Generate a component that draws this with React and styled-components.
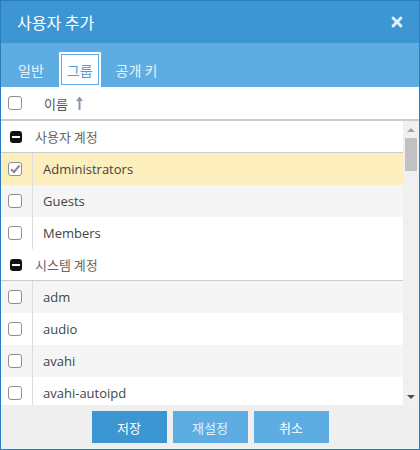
import React from 'react';
import styled, { createGlobalStyle } from 'styled-components';
import { FaTimes } from 'react-icons/fa';

const Global = createGlobalStyle`
  html, body { margin: 0; padding: 0; background: #fff; }
  body { font-family: "Open Sans", "Noto Sans CJK KR", sans-serif; }
  * { box-sizing: border-box; }
`;

const KR = `"Noto Sans CJK KR", "Open Sans", sans-serif`;

const Dialog = styled.div`
  width: 420px;
  height: 450px;
  border: 1px solid #2c7bbd;
  display: flex;
  flex-direction: column;
  overflow: hidden;
  background: #fff;
`;

const TitleBar = styled.div`
  height: 42px;
  flex: none;
  background: #3c96d2;
  display: flex;
  align-items: center;
  justify-content: space-between;
  padding: 0 14px 0 16px;
  color: #fff;
`;

const Title = styled.div`
  font-family: ${KR};
  font-size: 16px;
  line-height: 1;
`;

const CloseBtn = styled.span`
  display: flex;
  color: #e6f0f9;
`;

const TabBar = styled.div`
  height: 44px;
  flex: none;
  background: #5dade2;
  display: flex;
  align-items: flex-end;
  gap: 7px;
  padding-left: 9px;
`;

const Tab = styled.div`
  height: 35px;
  padding: 0 6px;
  border: 2px solid ${p => (p.$active ? '#fff' : 'transparent')};
  background: ${p => (p.$active ? '#fff' : 'transparent')};
  box-shadow: ${p => (p.$active ? 'inset 0 0 0 1px #5dade2' : 'none')};
  color: ${p => (p.$active ? '#4a9fd8' : '#e6f2fb')};
  font-family: ${KR};
  font-size: 14px;
  display: flex;
  align-items: center;
`;

const HeaderRow = styled.div`
  height: 34px;
  flex: none;
  border-bottom: 2px solid #cccccc;
  display: flex;
  align-items: center;
`;

const CheckCell = styled.div`
  width: 32px;
  height: 100%;
  flex: none;
  padding-left: 7px;
  display: flex;
  align-items: center;
  border-right: ${p => (p.$divider ? '1px solid #dddddd' : 'none')};
`;

const HeaderLabel = styled.div`
  display: flex;
  align-items: center;
  padding-left: 11px;
  font-family: ${KR};
  font-size: 13px;
  color: #555;
  gap: 8px;
`;

const Box = styled.span`
  width: 14px;
  height: 14px;
  border: 1px solid #8f8f8f;
  border-radius: 3px;
  background: #fff;
  display: flex;
  align-items: center;
  justify-content: center;
  flex: none;
`;

const Body = styled.div`
  flex: 1;
  display: flex;
  min-height: 0;
`;

const List = styled.div`
  flex: 1;
  overflow: hidden;
`;

const GroupRow = styled.div`
  height: 32px;
  border-bottom: 1px solid #cccccc;
  display: flex;
  align-items: center;
  padding-left: 9px;
  gap: 13px;
  font-family: ${KR};
  font-size: 13px;
  color: #666;
  background: #fff;
`;

const MinusSquare = styled.span`
  width: 12px;
  height: 12px;
  border-radius: 3px;
  background: #111;
  display: flex;
  align-items: center;
  justify-content: center;
  &::after {
    content: '';
    width: 8px;
    height: 2px;
    background: #fff;
  }
`;

const Row = styled.div`
  height: 32px;
  display: flex;
  align-items: center;
  background: ${p => (p.$selected ? '#fdeebd' : p.$alt ? '#f5f5f5' : '#ffffff')};
`;

const RowLabel = styled.div`
  padding-left: 10px;
  font-size: 13px;
  color: #444;
  white-space: nowrap;
`;

const Scrollbar = styled.div`
  width: 16px;
  flex: none;
  background: #f0f0f0;
  display: flex;
  flex-direction: column;
  align-items: center;
`;

const ArrowBtn = styled.div`
  height: 17px;
  width: 100%;
  flex: none;
  display: flex;
  align-items: center;
  justify-content: center;
  &::after {
    content: '';
    border-left: 4px solid transparent;
    border-right: 4px solid transparent;
    ${p => (p.$down
      ? 'border-top: 4px solid #505050;'
      : 'border-bottom: 4px solid #a3a3a3;')}
  }
`;

const Track = styled.div`
  flex: 1;
  width: 100%;
  display: flex;
  justify-content: center;
`;

const Thumb = styled.div`
  width: 12px;
  height: 33px;
  background: #c1c1c1;
`;

const Footer = styled.div`
  height: 44px;
  flex: none;
  background: #efefef;
  display: flex;
  align-items: center;
  justify-content: center;
  gap: 6px;
`;

const Button = styled.button`
  width: 75px;
  height: 32px;
  border: none;
  padding: 0;
  background: ${p => (p.$primary ? '#3c96d2' : '#5dade2')};
  color: ${p => (p.$muted ? '#e4f1fa' : '#fff')};
  font-family: ${KR};
  font-size: 13px;
`;

const Check = () => (
  <svg width="12" height="12" viewBox="0 0 12 12">
    <path d="M2 6.2 L5 9 L10.5 2.5" fill="none" stroke="#8a8a8a" strokeWidth="2" />
  </svg>
);

const SortUp = () => (
  <svg width="7" height="14" viewBox="0 0 7 14">
    <path d="M3.5 0.5 L7 5 L0 5 Z" fill="#8898aa" />
    <rect x="2.5" y="4" width="2" height="10" fill="#8898aa" />
  </svg>
);

const items = [
  { type: 'group', label: '사용자 계정' },
  { type: 'row', label: 'Administrators', checked: true, selected: true },
  { type: 'row', label: 'Guests' },
  { type: 'row', label: 'Members' },
  { type: 'group', label: '시스템 계정' },
  { type: 'row', label: 'adm' },
  { type: 'row', label: 'audio' },
  { type: 'row', label: 'avahi' },
  { type: 'row', label: 'avahi-autoipd' },
];

export default function App() {
  let rowIndex = 0;
  return (
    <>
      <Global />
      <Dialog>
        <TitleBar>
          <Title>사용자 추가</Title>
          <CloseBtn><FaTimes size={16} /></CloseBtn>
        </TitleBar>
        <TabBar>
          <Tab>일반</Tab>
          <Tab $active>그룹</Tab>
          <Tab>공개 키</Tab>
        </TabBar>
        <HeaderRow>
          <CheckCell><Box /></CheckCell>
          <HeaderLabel>이름 <SortUp /></HeaderLabel>
        </HeaderRow>
        <Body>
          <List>
            {items.map((it, i) => {
              if (it.type === 'group') {
                return (
                  <GroupRow key={i}>
                    <MinusSquare />
                    {it.label}
                  </GroupRow>
                );
              }
              const alt = rowIndex % 2 === 1;
              rowIndex += 1;
              return (
                <Row key={i} $alt={alt} $selected={it.selected}>
                  <CheckCell $divider>
                    <Box>{it.checked && <Check />}</Box>
                  </CheckCell>
                  <RowLabel>{it.label}</RowLabel>
                </Row>
              );
            })}
          </List>
          <Scrollbar>
            <ArrowBtn />
            <Track><Thumb /></Track>
            <ArrowBtn $down />
          </Scrollbar>
        </Body>
        <Footer>
          <Button $primary>저장</Button>
          <Button $muted>재설정</Button>
          <Button>취소</Button>
        </Footer>
      </Dialog>
    </>
  );
}
